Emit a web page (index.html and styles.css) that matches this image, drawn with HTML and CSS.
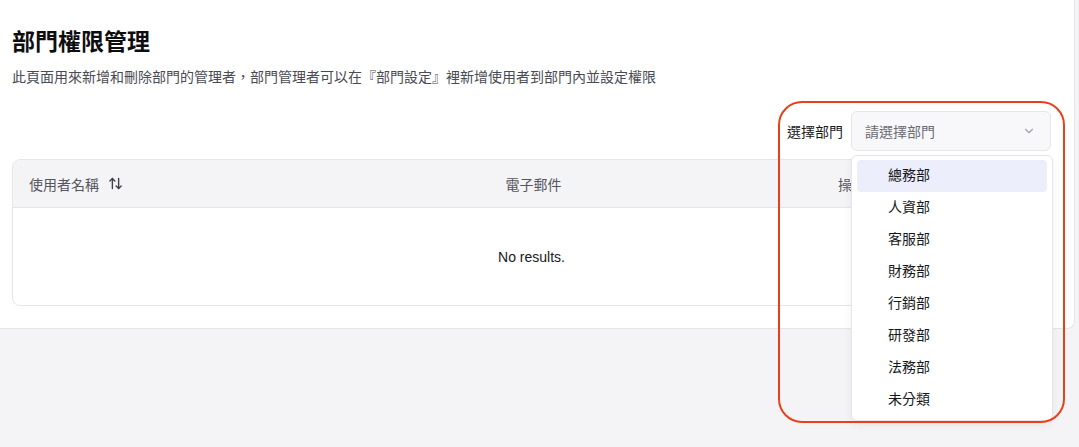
FILE: index.html
```html
<!DOCTYPE html>
<html lang="zh-Hant">
<head>
    <meta charset="UTF-8">
    <meta name="viewport" content="width=device-width, initial-scale=1.0">
    <title>部門權限管理</title>
    <link rel="stylesheet" href="styles.css">
</head>
<body>
    <div class="card">
        <h1>部門權限管理</h1>
        <p class="desc">此頁面用來新增和刪除部門的管理者，部門管理者可以在『部門設定』裡新增使用者到部門內並設定權限</p>

        <div class="toolbar">
            <label for="dept">選擇部門</label>
            <div class="select-box" id="dept">
                <span class="placeholder">請選擇部門</span>
                <svg class="chevron" width="14" height="14" viewBox="0 0 24 24" fill="none" stroke="currentColor" stroke-width="2" stroke-linecap="round" stroke-linejoin="round"><path d="m6 9 6 6 6-6"/></svg>
            </div>
        </div>

        <div class="table-wrap">
            <table>
                <thead>
                    <tr>
                        <th class="col-name">
                            <span class="sort">使用者名稱
                                <svg width="15" height="15" viewBox="0 0 24 24" fill="none" stroke="currentColor" stroke-width="2.2" stroke-linecap="round" stroke-linejoin="round"><path d="m21 16-4 4-4-4"/><path d="M17 20V4"/><path d="m3 8 4-4 4 4"/><path d="M7 4v16"/></svg>
                            </span>
                        </th>
                        <th class="col-mail">電子郵件</th>
                        <th class="col-act">操作</th>
                    </tr>
                </thead>
                <tbody>
                    <tr>
                        <td colspan="3" class="empty">No results.</td>
                    </tr>
                </tbody>
            </table>
        </div>
    </div>

    <!-- 下拉選單 -->
    <ul class="menu">
        <li class="active">總務部</li>
        <li>人資部</li>
        <li>客服部</li>
        <li>財務部</li>
        <li>行銷部</li>
        <li>研發部</li>
        <li>法務部</li>
        <li>未分類</li>
    </ul>

    <div class="mark"></div>
</body>
</html>
```

FILE: styles.css
```css
body {
    font-family: "Liberation Sans", "Noto Sans CJK TC", sans-serif;
    background-color: #f4f4f6;
    color: #18181b;
    margin: 0;
    padding: 0;
    height: 447px;
    overflow: hidden;
    position: relative;
}

.card {
    width: 1039px;
    background: #ffffff;
    border-right: 1px solid #e6e6ea;
    border-bottom: 1px solid #e6e6ea;
    border-radius: 0 0 8px 0;
    padding: 25px 23px 22px 12px;
}

h1 {
    font-size: 23px;
    font-weight: bold;
    margin: 0;
    line-height: 34px;
    color: #0e0e11;
}

.desc {
    font-size: 14px;
    color: #4a4a52;
    margin: 8px 0 0;
    line-height: 20px;
}

.toolbar {
    display: flex;
    justify-content: flex-end;
    align-items: center;
    gap: 8px;
    margin-top: 24px;
}

.toolbar label {
    font-size: 14px;
    color: #18181b;
}

.select-box {
    width: 200px;
    height: 40px;
    box-sizing: border-box;
    border: 1px solid #e6e6ea;
    border-radius: 6px;
    background-color: #f8f8fa;
    display: flex;
    align-items: center;
    justify-content: space-between;
    padding: 0 14px 0 13px;
}

.placeholder {
    font-size: 14px;
    color: #6b6b74;
}

.chevron {
    color: #a1a1aa;
}

.table-wrap {
    margin-top: 8px;
    border: 1px solid #e6e6ea;
    border-radius: 8px;
    overflow: hidden;
}

table {
    width: 100%;
    border-collapse: collapse;
}

th {
    background-color: #f4f4f7;
    height: 47px;
    font-size: 14px;
    font-weight: normal;
    color: #55555d;
    border-bottom: 1px solid #e6e6ea;
    padding: 0 16px;
}

.col-name {
    width: 200px;
    text-align: left;
}

.col-mail {
    text-align: center;
}

.col-act {
    width: 196px;
    text-align: left;
}

.sort {
    display: inline-flex;
    align-items: center;
    gap: 9px;
}

.sort svg {
    color: #3f3f46;
}

.empty {
    height: 95px;
    text-align: center;
    font-size: 14px;
    color: #18181b;
}

.menu {
    position: absolute;
    left: 851px;
    top: 155px;
    width: 202px;
    margin: 0;
    padding: 4px 5px;
    box-sizing: border-box;
    list-style: none;
    background: #ffffff;
    border: 1px solid #e6e6ea;
    border-radius: 6px;
    box-shadow: 0 4px 10px rgba(0, 0, 0, 0.06);
}

.menu li {
    height: 32px;
    line-height: 31px;
    padding-left: 31px;
    font-size: 14px;
    color: #18181b;
    border-radius: 4px;
}

.menu li.active {
    background-color: #eceefb;
}

.mark {
    position: absolute;
    left: 778px;
    top: 101px;
    width: 283px;
    height: 318px;
    border: 2.5px solid #e8401a;
    border-radius: 24px;
    pointer-events: none;
}
```
